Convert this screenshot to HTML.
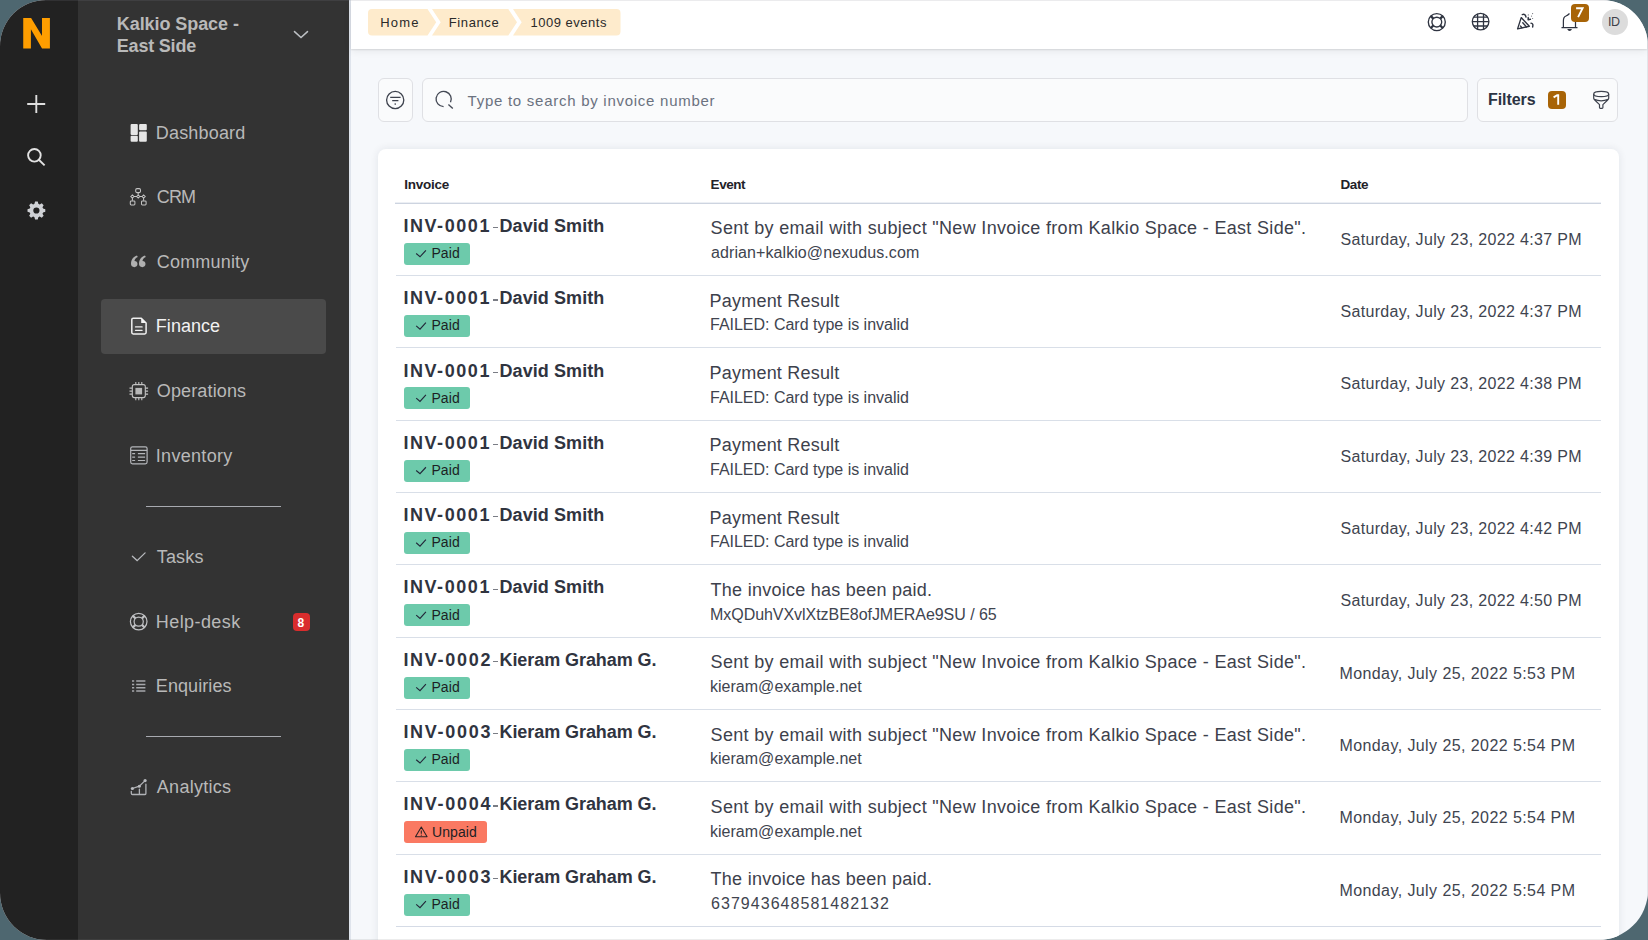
<!DOCTYPE html><html><head><meta charset="utf-8"><style>
*{margin:0;padding:0;box-sizing:border-box}
html,body{width:1648px;height:940px;overflow:hidden;background:#4e6770;font-family:"Liberation Sans", sans-serif}
.frame{position:absolute;left:0;top:0;width:1648px;height:940px;border-radius:46px 46px 50px 47px;overflow:hidden;background:#f6f8fb}
.t{position:absolute;line-height:1;white-space:nowrap}
.abs{position:absolute}
svg{position:absolute;overflow:visible}
</style></head><body><div class="frame"><div class="abs" style="left:0;top:0;width:78px;height:940px;background:#222222"></div><div class="abs" style="left:78px;top:0;width:271px;height:940px;background:#333333"></div><div class="abs" style="left:349px;top:0;width:2px;height:940px;background:#dfe4ec"></div><div class="abs" style="left:1647px;top:0;width:1px;height:940px;background:#e3e5ea"></div><div class="abs" style="left:351px;top:0;width:1296px;height:49px;background:#ffffff;box-shadow:0 1px 1.5px rgba(0,0,0,0.10),0 2px 8px rgba(0,0,0,0.07)"></div><svg style="left:0;top:0" width="80" height="60"><polygon fill="#ff9e00" points="23.23,18.04 31.12,18.04 42.03,36.03 42.03,18.04 49.91,18.04 49.91,48.56 42.03,48.56 30.91,29.16 30.91,48.56 23.23,48.56"/></svg><svg style="left:0;top:0" width="78" height="240"><path d="M36.3 95V113M27.2 104H45.2" stroke="#dedede" stroke-width="1.9" fill="none"/><circle cx="34.4" cy="155.3" r="6.3" stroke="#e2e2e2" stroke-width="1.9" fill="none"/><path d="M39.1 160L44.6 165.4" stroke="#e2e2e2" stroke-width="1.9" fill="none"/></svg><svg style="left:0;top:0" width="78" height="240"><path fill-rule="evenodd" fill="#cfd1d5" d="M33.76 204.13 L34.47 203.87 L35.06 201.60 L37.74 201.60 L38.33 203.87 L39.04 204.13 L39.72 204.45 L41.75 203.26 L43.64 205.15 L42.45 207.18 L42.77 207.86 L43.03 208.57 L45.30 209.16 L45.30 211.84 L43.03 212.43 L42.77 213.14 L42.45 213.82 L43.64 215.85 L41.75 217.74 L39.72 216.55 L39.04 216.87 L38.33 217.13 L37.74 219.40 L35.06 219.40 L34.47 217.13 L33.76 216.87 L33.08 216.55 L31.05 217.74 L29.16 215.85 L30.35 213.82 L30.03 213.14 L29.77 212.43 L27.50 211.84 L27.50 209.16 L29.77 208.57 L30.03 207.86 L30.35 207.18 L29.16 205.15 L31.05 203.26 L33.08 204.45Z M39.50 210.50 A3.1 3.1 0 1 0 33.30 210.50 A3.1 3.1 0 1 0 39.50 210.50Z"/></svg><div class="t" style="left:116.80px;top:15.06px;font-size:18px;color:#b9b9b9;font-weight:bold;letter-spacing:-0.073px;">Kalkio Space -</div><div class="t" style="left:116.80px;top:36.76px;font-size:18px;color:#b9b9b9;font-weight:bold;letter-spacing:-0.203px;">East Side</div><svg style="left:0;top:0" width="349" height="60"><path d="M294.5 31.6L301 37.6L307.5 31.6" stroke="#bdc0c4" stroke-width="1.5" fill="none" stroke-linecap="round"/></svg><div class="abs" style="left:101px;top:299px;width:225px;height:55px;border-radius:4px;background:#4a4a4a"></div><div class="t" style="left:155.80px;top:123.76px;font-size:18px;color:#b9b9b9;font-weight:normal;letter-spacing:0.182px;">Dashboard</div><div class="t" style="left:156.80px;top:188.36px;font-size:18px;color:#b9b9b9;font-weight:normal;letter-spacing:-0.849px;">CRM</div><div class="t" style="left:156.80px;top:252.96px;font-size:18px;color:#b9b9b9;font-weight:normal;letter-spacing:0.185px;">Community</div><div class="t" style="left:155.80px;top:317.36px;font-size:18px;color:#f2f2f2;font-weight:normal;letter-spacing:0.046px;">Finance</div><div class="t" style="left:156.80px;top:381.96px;font-size:18px;color:#b9b9b9;font-weight:normal;letter-spacing:0.139px;">Operations</div><div class="t" style="left:155.80px;top:446.56px;font-size:18px;color:#b9b9b9;font-weight:normal;letter-spacing:0.308px;">Inventory</div><div class="t" style="left:156.80px;top:547.66px;font-size:18px;color:#b9b9b9;font-weight:normal;letter-spacing:0.147px;">Tasks</div><div class="t" style="left:155.80px;top:612.56px;font-size:18px;color:#b9b9b9;font-weight:normal;letter-spacing:0.421px;">Help-desk</div><div class="t" style="left:155.80px;top:676.76px;font-size:18px;color:#b9b9b9;font-weight:normal;letter-spacing:0.082px;">Enquiries</div><div class="t" style="left:156.80px;top:777.86px;font-size:18px;color:#b9b9b9;font-weight:normal;letter-spacing:0.284px;">Analytics</div><div class="abs" style="left:146px;top:505.5px;width:135px;height:1px;background:#a8aab0"></div><div class="abs" style="left:146px;top:736px;width:135px;height:1px;background:#a8aab0"></div><div class="abs" style="left:293px;top:613px;width:17px;height:18px;border-radius:4px;background:#d92d2d"></div><div class="t" style="left:297.50px;top:616.84px;font-size:12px;color:#ffffff;font-weight:bold;letter-spacing:0.000px;">8</div><svg style="left:0;top:0" width="349" height="940"><g fill="#e6e6e6"><rect x="130.6" y="123.9" width="7.2" height="11.1" rx="1"/><rect x="139.1" y="123.9" width="7.7" height="6.4" rx="1"/><rect x="130.6" y="135.8" width="7.2" height="6" rx="1"/><rect x="139.1" y="131.6" width="7.7" height="10.2" rx="1"/></g><g stroke="#c4c4c4" stroke-width="1.05" fill="none"><rect x="135.7" y="188.6" width="4.8" height="4.0" rx="1.3"/><path d="M130.8 196.5L132.4 194.9L134 196.5L132.4 198.1Z M136.6 196.5L138.2 194.9L139.8 196.5L138.2 198.1Z M142 196.5L143.6 194.9L145.2 196.5L143.6 198.1Z M134 196.5H136.6M139.8 196.5H142M132.4 198.1V200.8M143.6 198.1V200.8M138.2 192.6V194.9"/><rect x="130.3" y="200.9" width="4.6" height="4.1" rx="0.9"/><rect x="141.5" y="200.9" width="4.6" height="4.1" rx="0.9"/></g><g fill="#b0b0b0" transform="translate(0 0.6)"><path d="M131 263.5c0-4.5 2.3-7.3 6-8.5l0.8 1.4c-2.2 1-3.2 2.6-3.3 4.1c1.8 0 3 1.3 3 3c0 1.8-1.4 3.1-3.1 3.1c-2 0-3.4-1.4-3.4-3.1z"/><path d="M139 263.5c0-4.5 2.3-7.3 6-8.5l0.8 1.4c-2.2 1-3.2 2.6-3.3 4.1c1.8 0 3 1.3 3 3c0 1.8-1.4 3.1-3.1 3.1c-2 0-3.4-1.4-3.4-3.1z"/></g><g stroke="#f0f0f0" stroke-width="1.5" fill="none" stroke-linejoin="round"><path d="M133.2 318.2H141.3L146.1 323V332.6Q146.1 334 144.7 334H133.2Q131.8 334 131.8 332.6V319.6Q131.8 318.2 133.2 318.2Z"/><path d="M135.5 326.9H142.1M135.5 330.3H142.1" stroke-linecap="round" stroke-width="1.3"/></g><path d="M141.2 318.2L146.1 323.1H141.2Z" fill="#f4f4f4"/><g stroke="#c4c4c4" stroke-width="1.1" fill="none"><rect x="132.3" y="384.6" width="13" height="13" rx="2"/><path d="M135.8 381.9V384.6M138.8 381.9V384.6M141.8 381.9V384.6M135.8 397.6V400.3M138.8 397.6V400.3M141.8 397.6V400.3M129.5 388.1H132.3M129.5 391.1H132.3M129.5 394.1H132.3M145.3 388.1H148.1M145.3 391.1H148.1M145.3 394.1H148.1"/></g><rect x="135.4" y="387.9" width="6.7" height="6.5" fill="#b8b8b8"/><g stroke="#b4b6ba" stroke-width="1.2" fill="none"><rect x="130.7" y="446.8" width="16.4" height="17" rx="1.8"/><path d="M130.7 450.3H147.1M132.2 453.6H135.1M137.9 453.6H145.1M132.2 457.1H135.1M137.9 457.1H145.1M132.2 460.5H135.1M137.9 460.5H145.1"/></g><path d="M132.4 556.3L137.1 560.6L145.1 552.9" stroke="#b8babe" stroke-width="1.3" fill="none" stroke-linecap="round"/><g stroke="#c0c1c4" stroke-width="1.25" fill="none"><circle cx="138.7" cy="621.6" r="8.3"/><circle cx="138.7" cy="621.6" r="4.6"/><path stroke-width="2.2" d="M141.95 624.85L144.64 627.54M135.45 624.85L132.76 627.54M135.45 618.35L132.76 615.66M141.95 618.35L144.64 615.66"/></g><g stroke="#a6a8ac" stroke-width="1.5" fill="none"><path d="M132 680.9H134.2M132 684.4H134.2M132 687.8H134.2M132 691.1H134.2M136.2 680.9H145.4M136.2 684.4H145.4M136.2 687.8H145.4M136.2 691.1H145.4"/></g><g stroke="#b0b2b6" stroke-width="1.3" fill="none" stroke-linecap="round"><path d="M131.3 791.3V793.3Q131.3 794.5 132.5 794.5H145Q145.9 794.5 145.9 793.6V784.2M139.4 789.2V794.5M132.4 788.5L139.3 786.2L145.1 780.6"/></g><g fill="#b8babe"><circle cx="132.4" cy="788.5" r="1.6"/><circle cx="139.3" cy="786.2" r="1.5"/><circle cx="145.1" cy="780.6" r="1.6"/></g></svg><svg style="left:0;top:0" width="700" height="49"><path fill="#feebcc" d="M372 9H427.5L436.2 22.2L427.5 35.5H372Q368 35.5 368 31.5V13Q368 9 372 9Z"/><path fill="#feebcc" d="M432 9H508.3L517 22.2L508.3 35.5H432L440.7 22.2Z"/><path fill="#feebcc" d="M513 9H616.5Q620.5 9 620.5 13V31.5Q620.5 35.5 616.5 35.5H513L521.7 22.2Z"/></svg><div class="t" style="left:380.30px;top:15.59px;font-size:13px;color:#2a2a2a;font-weight:normal;letter-spacing:1.151px;">Home</div><div class="t" style="left:448.80px;top:15.59px;font-size:13px;color:#2a2a2a;font-weight:normal;letter-spacing:0.597px;">Finance</div><div class="t" style="left:530.40px;top:15.59px;font-size:13px;color:#2a2a2a;font-weight:normal;letter-spacing:0.527px;">1009 events</div><svg style="left:0;top:0" width="1648" height="49"><g stroke="#2f3441" stroke-width="1.35" fill="none"><circle cx="1436.8" cy="22.1" r="8.5"/><circle cx="1436.8" cy="22.1" r="4.9"/><path stroke-width="2.3" d="M1440.26 25.56L1442.74 28.04M1433.34 25.56L1430.86 28.04M1433.34 18.64L1430.86 16.16M1440.26 18.64L1442.74 16.16"/></g><g stroke="#2f3441" stroke-width="1.3" fill="none"><circle cx="1480.6" cy="21.6" r="8.3"/><path d="M1472.3 21.6H1488.9M1473.5 17.2H1487.7M1473.5 26.0H1487.7M1477.6 13.8V29.4M1483.5 13.8V29.4"/></g><g stroke="#2f3441" stroke-width="1.4" fill="none" stroke-linejoin="round" stroke-linecap="round"><path d="M1517.6 28.9L1521.2 17.6L1529.3 26.2Z"/><path d="M1522.8 22.8L1526.4 26.9M1520.6 26.1L1521.9 27.8"/><path d="M1522.3 14.6Q1525.2 13.3 1526 17M1531 23.1Q1533.6 23.6 1532.6 27M1528.2 17.5L1528.1 19.8L1530.4 19.3"/></g><g fill="#2f3441" opacity="0.7"><circle cx="1528.3" cy="14.9" r="0.6"/><circle cx="1532.6" cy="13.6" r="0.6"/><circle cx="1531.5" cy="16.1" r="0.6"/><circle cx="1532.6" cy="18.5" r="0.6"/></g><g stroke="#2f3441" stroke-width="1.25" fill="none"><path d="M1561.5 27.5H1577.5M1563.4 27.5V20.8C1563.4 17.5 1564.5 16.5 1566 16C1567.5 15.5 1568.5 14.5 1569.5 13.5M1575.5 22V27.5"/></g><path d="M1567.2 29.1H1572Q1571.2 31 1569.6 31Q1568 31 1567.2 29.1Z" fill="#2f3441"/></svg><div class="abs" style="left:1571px;top:3.7px;width:17.5px;height:18px;border-radius:4px;background:#a86407"></div><svg style="left:0;top:0" width="1648" height="49"><path d="M1576.1 8.2H1582.6L1578.1 17.1" stroke="#ffffff" stroke-width="1.9" fill="none" stroke-linejoin="miter"/></svg><div class="abs" style="left:1601.6px;top:9px;width:26.2px;height:26.2px;border-radius:50%;background:#dcdcdc"></div><div class="t" style="left:1607.90px;top:16.12px;font-size:12.5px;color:#3e4048;font-weight:normal;letter-spacing:-0.273px;">ID</div><div class="abs" style="left:378px;top:78px;width:34.6px;height:44px;border:1px solid #dfe0e4;border-radius:6px;background:#fafbfc"></div><svg style="left:0;top:0" width="500" height="140"><g stroke="#3d424d" stroke-width="1.3" fill="none"><circle cx="395.2" cy="100" r="8.6"/><path d="M390.2 97.3H400.6M392.2 100.7H398.4"/></g><circle cx="395.2" cy="104.1" r="0.8" fill="#3d424d"/></svg><div class="abs" style="left:422.3px;top:78px;width:1045.5px;height:44px;border:1px solid #dfe0e4;border-radius:6px;background:#fafbfc"></div><svg style="left:0;top:0" width="500" height="140"><path d="M443.6 106.6A7.6 7.6 0 1 1 450.5 102.3" stroke="#444955" stroke-width="1.35" fill="none"/><path d="M448.4 104.4L452.8 108.6" stroke="#444955" stroke-width="1.35"/></svg><div class="t" style="left:467.60px;top:93.20px;font-size:15px;color:#6b7280;font-weight:normal;letter-spacing:0.733px;">Type to search by invoice number</div><div class="abs" style="left:1476.9px;top:78px;width:141.6px;height:44px;border:1px solid #dfe0e4;border-radius:6px;background:#fafbfc"></div><div class="t" style="left:1487.90px;top:92.15px;font-size:16px;color:#2b3343;font-weight:bold;letter-spacing:-0.036px;">Filters</div><div class="abs" style="left:1548.2px;top:91.1px;width:17.5px;height:18px;border-radius:4px;background:#a86407"></div><svg style="left:0;top:0" width="1648" height="140"><path d="M1553.6 97.4L1557.2 95.2H1558.2V104.8" stroke="#ffffff" stroke-width="1.9" fill="none" stroke-linejoin="miter"/></svg><svg style="left:0;top:0" width="1648" height="140"><g stroke="#3d424d" stroke-width="1.2" fill="none" stroke-linejoin="round"><ellipse cx="1601.2" cy="94" rx="7.5" ry="2.7"/><path d="M1593.7 94V98.3Q1594 99.5 1595 100.3L1599.5 104.6V107.6Q1599.5 108.4 1600.3 108.4H1602.1Q1602.9 108.4 1602.9 107.6V104.6L1607.4 100.3Q1608.4 99.5 1608.7 98.3V94M1594.3 99.3Q1601.2 102.4 1608.1 99.3"/></g></svg><div class="abs" style="left:378px;top:149px;width:1241px;height:800px;border-radius:8px;background:#ffffff;box-shadow:0 0 9px rgba(20,30,60,0.09)"></div><div class="t" style="left:404.30px;top:177.57px;font-size:13.5px;color:#222228;font-weight:bold;letter-spacing:-0.268px;">Invoice</div><div class="t" style="left:710.60px;top:177.57px;font-size:13.5px;color:#222228;font-weight:bold;letter-spacing:-0.467px;">Event</div><div class="t" style="left:1340.40px;top:177.57px;font-size:13.5px;color:#222228;font-weight:bold;letter-spacing:-0.384px;">Date</div><div class="abs" style="left:395px;top:203px;width:1206px;height:1px;background:#cdd4e0"></div><div class="abs" style="left:395px;top:202px;width:1206px;height:1px;background:#eceff4"></div><div class="t" style="left:403.40px;top:216.86px;font-size:18px;color:#30343f;font-weight:bold;letter-spacing:1.566px;">INV-0001</div><div class="abs" style="left:493.2px;top:226.90px;width:5.2px;height:1.3px;background:#7a7d85"></div><div class="t" style="left:499.50px;top:216.86px;font-size:18px;color:#30343f;font-weight:bold;letter-spacing:0.078px;">David Smith</div><div class="abs" style="left:404px;top:242.80px;width:65.5px;height:22px;border-radius:3px;background:#6dcaab"></div><svg style="left:0;top:0" width="1" height="1"><path d="M416.2 253.50L420 256.80L425.9 250.30" stroke="#23283a" stroke-width="1.15" fill="none"/></svg><div class="t" style="left:431.40px;top:245.95px;font-size:14px;color:#1c1f24;font-weight:normal;letter-spacing:0.122px;">Paid</div><div class="t" style="left:710.60px;top:219.36px;font-size:18px;color:#3d414c;font-weight:normal;letter-spacing:0.320px;">Sent by email with subject &quot;New Invoice from Kalkio Space - East Side&quot;.</div><div class="t" style="left:711.00px;top:245.05px;font-size:16px;color:#40444f;font-weight:normal;letter-spacing:0.087px;">adrian+kalkio@nexudus.com</div><div class="t" style="left:1340.40px;top:231.85px;font-size:16px;color:#40444f;font-weight:normal;letter-spacing:0.343px;">Saturday, July 23, 2022 4:37 PM</div><div class="abs" style="left:395.5px;top:275px;width:1205.5px;height:1px;background:#d9dfe8"></div><div class="t" style="left:403.40px;top:289.18px;font-size:18px;color:#30343f;font-weight:bold;letter-spacing:1.566px;">INV-0001</div><div class="abs" style="left:493.2px;top:299.22px;width:5.2px;height:1.3px;background:#7a7d85"></div><div class="t" style="left:499.50px;top:289.18px;font-size:18px;color:#30343f;font-weight:bold;letter-spacing:0.078px;">David Smith</div><div class="abs" style="left:404px;top:315.12px;width:65.5px;height:22px;border-radius:3px;background:#6dcaab"></div><svg style="left:0;top:0" width="1" height="1"><path d="M416.2 325.82L420 329.12L425.9 322.62" stroke="#23283a" stroke-width="1.15" fill="none"/></svg><div class="t" style="left:431.40px;top:318.27px;font-size:14px;color:#1c1f24;font-weight:normal;letter-spacing:0.122px;">Paid</div><div class="t" style="left:709.60px;top:291.68px;font-size:18px;color:#3d414c;font-weight:normal;letter-spacing:0.204px;">Payment Result</div><div class="t" style="left:710.00px;top:317.37px;font-size:16px;color:#40444f;font-weight:normal;letter-spacing:-0.011px;">FAILED: Card type is invalid</div><div class="t" style="left:1340.40px;top:304.17px;font-size:16px;color:#40444f;font-weight:normal;letter-spacing:0.343px;">Saturday, July 23, 2022 4:37 PM</div><div class="abs" style="left:395.5px;top:347px;width:1205.5px;height:1px;background:#d9dfe8"></div><div class="t" style="left:403.40px;top:361.50px;font-size:18px;color:#30343f;font-weight:bold;letter-spacing:1.566px;">INV-0001</div><div class="abs" style="left:493.2px;top:371.54px;width:5.2px;height:1.3px;background:#7a7d85"></div><div class="t" style="left:499.50px;top:361.50px;font-size:18px;color:#30343f;font-weight:bold;letter-spacing:0.078px;">David Smith</div><div class="abs" style="left:404px;top:387.44px;width:65.5px;height:22px;border-radius:3px;background:#6dcaab"></div><svg style="left:0;top:0" width="1" height="1"><path d="M416.2 398.14L420 401.44L425.9 394.94" stroke="#23283a" stroke-width="1.15" fill="none"/></svg><div class="t" style="left:431.40px;top:390.59px;font-size:14px;color:#1c1f24;font-weight:normal;letter-spacing:0.122px;">Paid</div><div class="t" style="left:709.60px;top:364.00px;font-size:18px;color:#3d414c;font-weight:normal;letter-spacing:0.204px;">Payment Result</div><div class="t" style="left:710.00px;top:389.69px;font-size:16px;color:#40444f;font-weight:normal;letter-spacing:-0.011px;">FAILED: Card type is invalid</div><div class="t" style="left:1340.40px;top:376.49px;font-size:16px;color:#40444f;font-weight:normal;letter-spacing:0.343px;">Saturday, July 23, 2022 4:38 PM</div><div class="abs" style="left:395.5px;top:420px;width:1205.5px;height:1px;background:#d9dfe8"></div><div class="t" style="left:403.40px;top:433.82px;font-size:18px;color:#30343f;font-weight:bold;letter-spacing:1.566px;">INV-0001</div><div class="abs" style="left:493.2px;top:443.86px;width:5.2px;height:1.3px;background:#7a7d85"></div><div class="t" style="left:499.50px;top:433.82px;font-size:18px;color:#30343f;font-weight:bold;letter-spacing:0.078px;">David Smith</div><div class="abs" style="left:404px;top:459.76px;width:65.5px;height:22px;border-radius:3px;background:#6dcaab"></div><svg style="left:0;top:0" width="1" height="1"><path d="M416.2 470.46L420 473.76L425.9 467.26" stroke="#23283a" stroke-width="1.15" fill="none"/></svg><div class="t" style="left:431.40px;top:462.91px;font-size:14px;color:#1c1f24;font-weight:normal;letter-spacing:0.122px;">Paid</div><div class="t" style="left:709.60px;top:436.32px;font-size:18px;color:#3d414c;font-weight:normal;letter-spacing:0.204px;">Payment Result</div><div class="t" style="left:710.00px;top:462.01px;font-size:16px;color:#40444f;font-weight:normal;letter-spacing:-0.011px;">FAILED: Card type is invalid</div><div class="t" style="left:1340.40px;top:448.81px;font-size:16px;color:#40444f;font-weight:normal;letter-spacing:0.343px;">Saturday, July 23, 2022 4:39 PM</div><div class="abs" style="left:395.5px;top:492px;width:1205.5px;height:1px;background:#d9dfe8"></div><div class="t" style="left:403.40px;top:506.14px;font-size:18px;color:#30343f;font-weight:bold;letter-spacing:1.566px;">INV-0001</div><div class="abs" style="left:493.2px;top:516.18px;width:5.2px;height:1.3px;background:#7a7d85"></div><div class="t" style="left:499.50px;top:506.14px;font-size:18px;color:#30343f;font-weight:bold;letter-spacing:0.078px;">David Smith</div><div class="abs" style="left:404px;top:532.08px;width:65.5px;height:22px;border-radius:3px;background:#6dcaab"></div><svg style="left:0;top:0" width="1" height="1"><path d="M416.2 542.78L420 546.08L425.9 539.58" stroke="#23283a" stroke-width="1.15" fill="none"/></svg><div class="t" style="left:431.40px;top:535.23px;font-size:14px;color:#1c1f24;font-weight:normal;letter-spacing:0.122px;">Paid</div><div class="t" style="left:709.60px;top:508.64px;font-size:18px;color:#3d414c;font-weight:normal;letter-spacing:0.204px;">Payment Result</div><div class="t" style="left:710.00px;top:534.33px;font-size:16px;color:#40444f;font-weight:normal;letter-spacing:-0.011px;">FAILED: Card type is invalid</div><div class="t" style="left:1340.40px;top:521.13px;font-size:16px;color:#40444f;font-weight:normal;letter-spacing:0.343px;">Saturday, July 23, 2022 4:42 PM</div><div class="abs" style="left:395.5px;top:564px;width:1205.5px;height:1px;background:#d9dfe8"></div><div class="t" style="left:403.40px;top:578.46px;font-size:18px;color:#30343f;font-weight:bold;letter-spacing:1.566px;">INV-0001</div><div class="abs" style="left:493.2px;top:588.50px;width:5.2px;height:1.3px;background:#7a7d85"></div><div class="t" style="left:499.50px;top:578.46px;font-size:18px;color:#30343f;font-weight:bold;letter-spacing:0.078px;">David Smith</div><div class="abs" style="left:404px;top:604.40px;width:65.5px;height:22px;border-radius:3px;background:#6dcaab"></div><svg style="left:0;top:0" width="1" height="1"><path d="M416.2 615.10L420 618.40L425.9 611.90" stroke="#23283a" stroke-width="1.15" fill="none"/></svg><div class="t" style="left:431.40px;top:607.55px;font-size:14px;color:#1c1f24;font-weight:normal;letter-spacing:0.122px;">Paid</div><div class="t" style="left:710.60px;top:580.96px;font-size:18px;color:#3d414c;font-weight:normal;letter-spacing:0.254px;">The invoice has been paid.</div><div class="t" style="left:710.00px;top:606.65px;font-size:16px;color:#40444f;font-weight:normal;letter-spacing:-0.046px;">MxQDuhVXvlXtzBE8ofJMERAe9SU / 65</div><div class="t" style="left:1340.40px;top:593.45px;font-size:16px;color:#40444f;font-weight:normal;letter-spacing:0.343px;">Saturday, July 23, 2022 4:50 PM</div><div class="abs" style="left:395.5px;top:637px;width:1205.5px;height:1px;background:#d9dfe8"></div><div class="t" style="left:403.40px;top:650.78px;font-size:18px;color:#30343f;font-weight:bold;letter-spacing:1.709px;">INV-0002</div><div class="abs" style="left:493.2px;top:660.82px;width:5.2px;height:1.3px;background:#7a7d85"></div><div class="t" style="left:499.50px;top:650.78px;font-size:18px;color:#30343f;font-weight:bold;letter-spacing:-0.071px;">Kieram Graham G.</div><div class="abs" style="left:404px;top:676.72px;width:65.5px;height:22px;border-radius:3px;background:#6dcaab"></div><svg style="left:0;top:0" width="1" height="1"><path d="M416.2 687.42L420 690.72L425.9 684.22" stroke="#23283a" stroke-width="1.15" fill="none"/></svg><div class="t" style="left:431.40px;top:679.87px;font-size:14px;color:#1c1f24;font-weight:normal;letter-spacing:0.122px;">Paid</div><div class="t" style="left:710.60px;top:653.28px;font-size:18px;color:#3d414c;font-weight:normal;letter-spacing:0.320px;">Sent by email with subject &quot;New Invoice from Kalkio Space - East Side&quot;.</div><div class="t" style="left:710.00px;top:678.97px;font-size:16px;color:#40444f;font-weight:normal;letter-spacing:0.019px;">kieram@example.net</div><div class="t" style="left:1339.40px;top:665.77px;font-size:16px;color:#40444f;font-weight:normal;letter-spacing:0.421px;">Monday, July 25, 2022 5:53 PM</div><div class="abs" style="left:395.5px;top:709px;width:1205.5px;height:1px;background:#d9dfe8"></div><div class="t" style="left:403.40px;top:723.10px;font-size:18px;color:#30343f;font-weight:bold;letter-spacing:1.709px;">INV-0003</div><div class="abs" style="left:493.2px;top:733.14px;width:5.2px;height:1.3px;background:#7a7d85"></div><div class="t" style="left:499.50px;top:723.10px;font-size:18px;color:#30343f;font-weight:bold;letter-spacing:-0.071px;">Kieram Graham G.</div><div class="abs" style="left:404px;top:749.04px;width:65.5px;height:22px;border-radius:3px;background:#6dcaab"></div><svg style="left:0;top:0" width="1" height="1"><path d="M416.2 759.74L420 763.04L425.9 756.54" stroke="#23283a" stroke-width="1.15" fill="none"/></svg><div class="t" style="left:431.40px;top:752.19px;font-size:14px;color:#1c1f24;font-weight:normal;letter-spacing:0.122px;">Paid</div><div class="t" style="left:710.60px;top:725.60px;font-size:18px;color:#3d414c;font-weight:normal;letter-spacing:0.320px;">Sent by email with subject &quot;New Invoice from Kalkio Space - East Side&quot;.</div><div class="t" style="left:710.00px;top:751.29px;font-size:16px;color:#40444f;font-weight:normal;letter-spacing:0.019px;">kieram@example.net</div><div class="t" style="left:1339.40px;top:738.09px;font-size:16px;color:#40444f;font-weight:normal;letter-spacing:0.421px;">Monday, July 25, 2022 5:54 PM</div><div class="abs" style="left:395.5px;top:781px;width:1205.5px;height:1px;background:#d9dfe8"></div><div class="t" style="left:403.40px;top:795.42px;font-size:18px;color:#30343f;font-weight:bold;letter-spacing:1.709px;">INV-0004</div><div class="abs" style="left:493.2px;top:805.46px;width:5.2px;height:1.3px;background:#7a7d85"></div><div class="t" style="left:499.50px;top:795.42px;font-size:18px;color:#30343f;font-weight:bold;letter-spacing:-0.071px;">Kieram Graham G.</div><div class="abs" style="left:404.2px;top:821.36px;width:83px;height:22px;border-radius:3px;background:#fa7962"></div><svg style="left:0;top:0" width="1" height="1"><path d="M421.3 827.06L427.1 836.66H415.5Z" stroke="#2a2224" stroke-width="1.05" fill="none" stroke-linejoin="round"/><path d="M421.3 830.46V833.66" stroke="#2a2224" stroke-width="1.1"/><circle cx="421.3" cy="835.16" r="0.55" fill="#2a2224"/></svg><div class="t" style="left:432.00px;top:824.51px;font-size:14px;color:#1c1f24;font-weight:normal;letter-spacing:0.084px;">Unpaid</div><div class="t" style="left:710.60px;top:797.92px;font-size:18px;color:#3d414c;font-weight:normal;letter-spacing:0.320px;">Sent by email with subject &quot;New Invoice from Kalkio Space - East Side&quot;.</div><div class="t" style="left:710.00px;top:823.61px;font-size:16px;color:#40444f;font-weight:normal;letter-spacing:0.019px;">kieram@example.net</div><div class="t" style="left:1339.40px;top:810.41px;font-size:16px;color:#40444f;font-weight:normal;letter-spacing:0.421px;">Monday, July 25, 2022 5:54 PM</div><div class="abs" style="left:395.5px;top:854px;width:1205.5px;height:1px;background:#d9dfe8"></div><div class="t" style="left:403.40px;top:867.74px;font-size:18px;color:#30343f;font-weight:bold;letter-spacing:1.709px;">INV-0003</div><div class="abs" style="left:493.2px;top:877.78px;width:5.2px;height:1.3px;background:#7a7d85"></div><div class="t" style="left:499.50px;top:867.74px;font-size:18px;color:#30343f;font-weight:bold;letter-spacing:-0.071px;">Kieram Graham G.</div><div class="abs" style="left:404px;top:893.68px;width:65.5px;height:22px;border-radius:3px;background:#6dcaab"></div><svg style="left:0;top:0" width="1" height="1"><path d="M416.2 904.38L420 907.68L425.9 901.18" stroke="#23283a" stroke-width="1.15" fill="none"/></svg><div class="t" style="left:431.40px;top:896.83px;font-size:14px;color:#1c1f24;font-weight:normal;letter-spacing:0.122px;">Paid</div><div class="t" style="left:710.60px;top:870.24px;font-size:18px;color:#3d414c;font-weight:normal;letter-spacing:0.254px;">The invoice has been paid.</div><div class="t" style="left:711.00px;top:895.93px;font-size:16px;color:#40444f;font-weight:normal;letter-spacing:1.043px;">637943648581482132</div><div class="t" style="left:1339.40px;top:882.73px;font-size:16px;color:#40444f;font-weight:normal;letter-spacing:0.421px;">Monday, July 25, 2022 5:54 PM</div><div class="abs" style="left:395.5px;top:926px;width:1205.5px;height:1px;background:#d5dbe6"></div><div class="abs" style="left:0;top:0;width:1648px;height:1px;background:rgba(128,128,140,0.16)"></div><div class="abs" style="left:0;top:939px;width:1648px;height:1px;background:rgba(128,128,128,0.15)"></div></div></body></html>
